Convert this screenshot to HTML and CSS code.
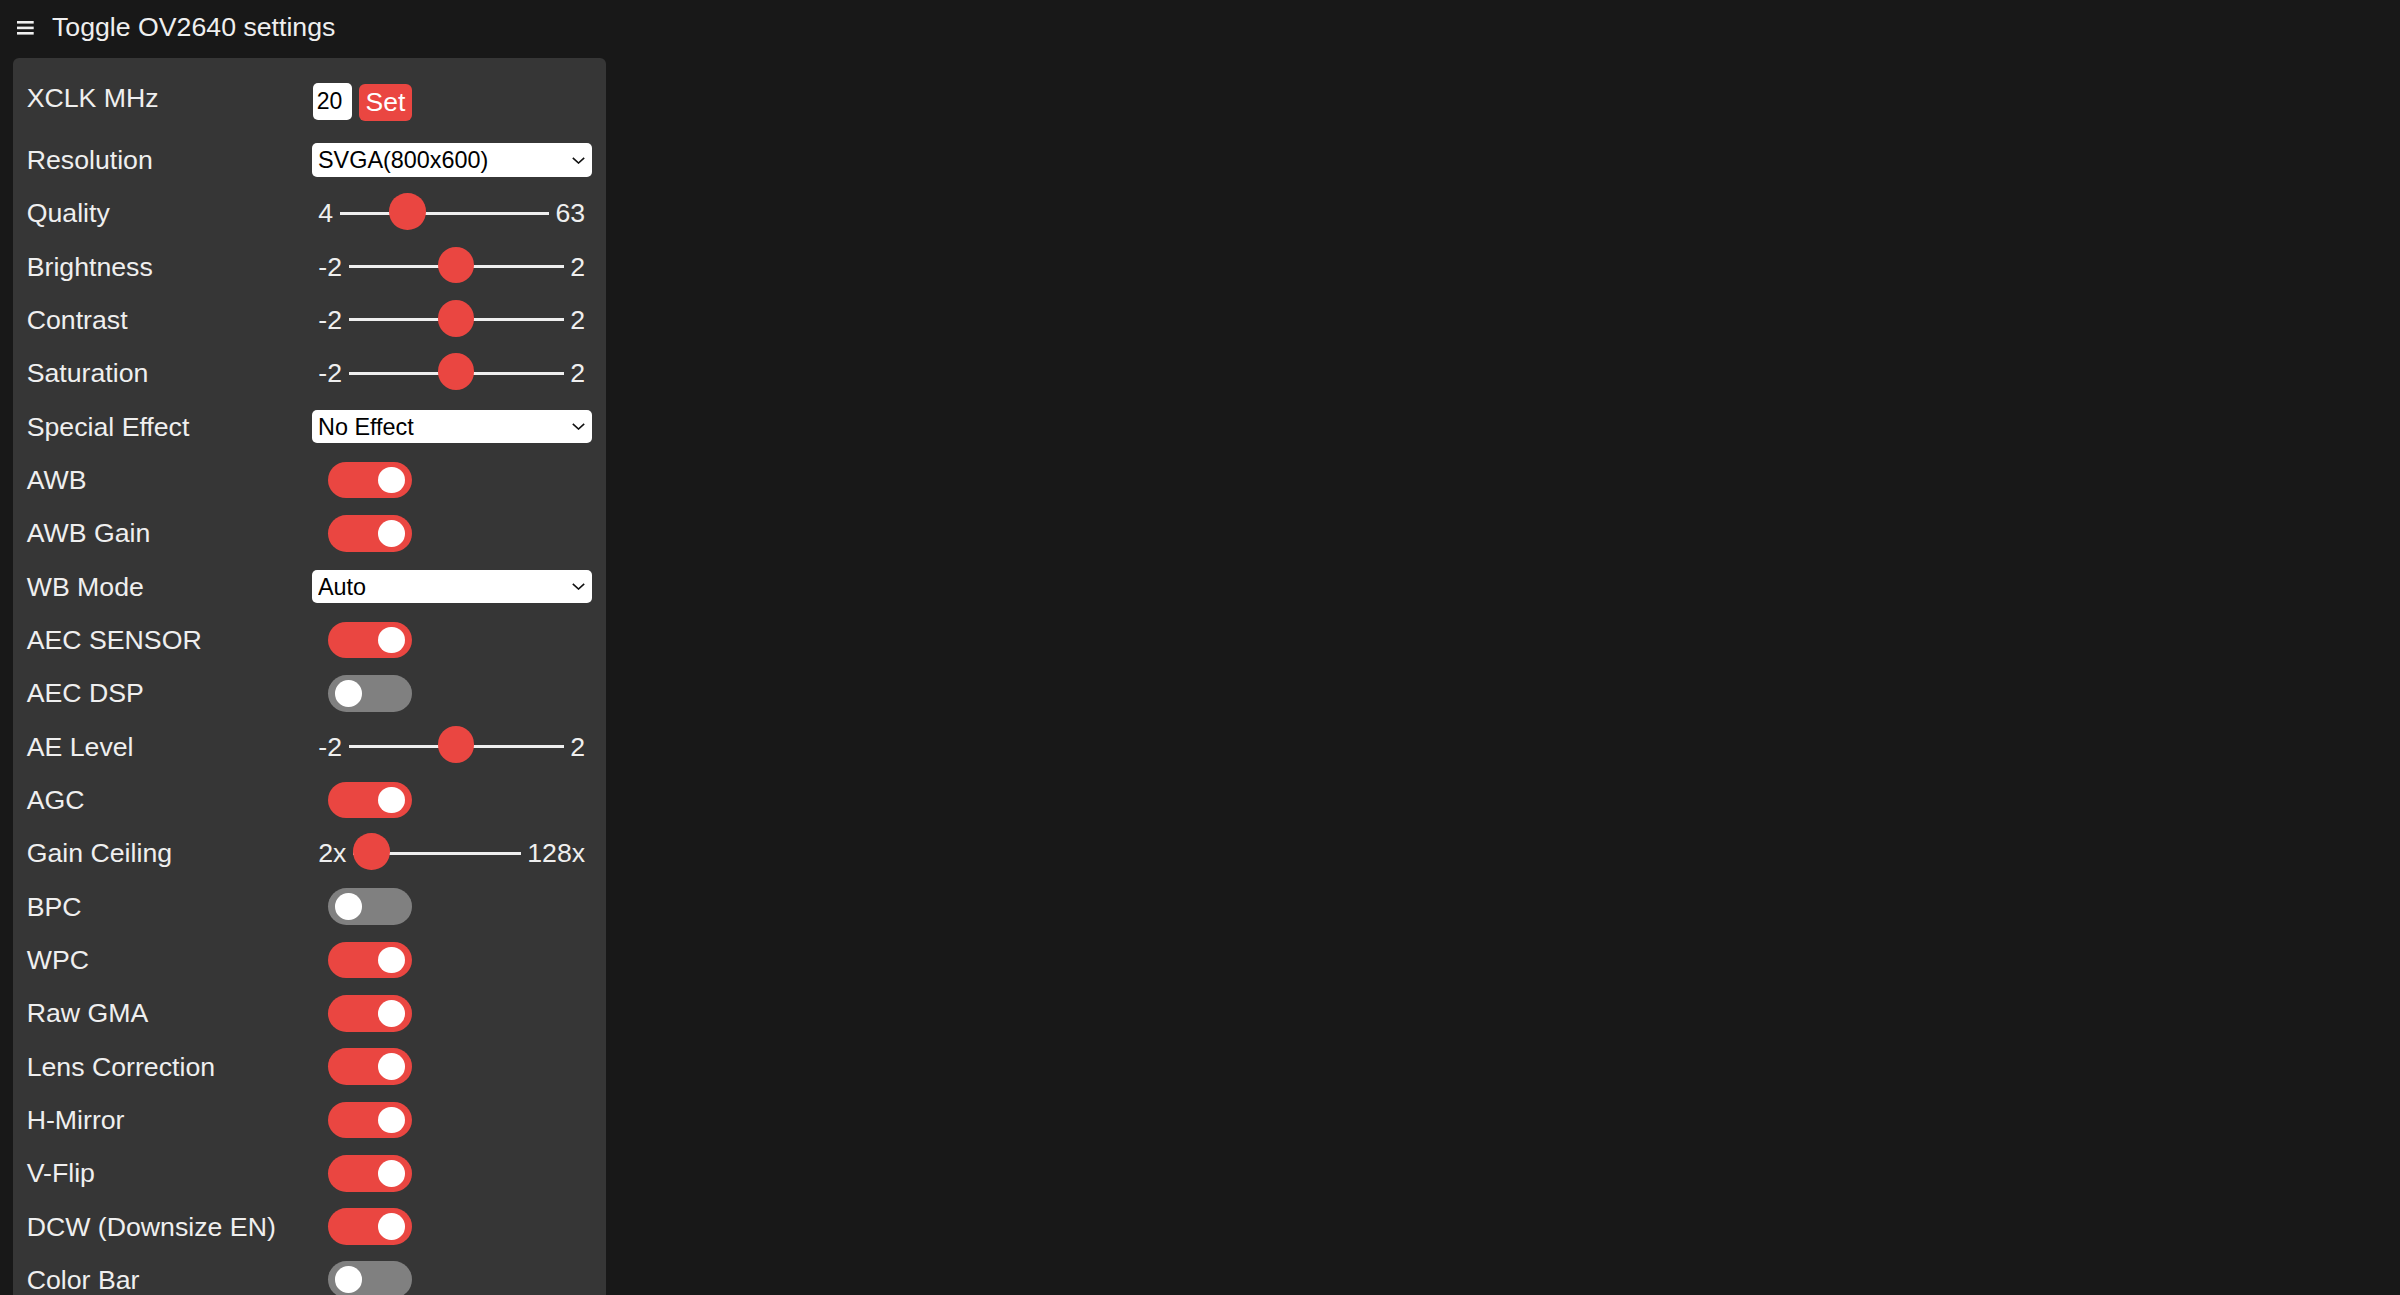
FILE: index.html
```html
<!DOCTYPE html>
<html lang="en">
<head>
<meta charset="utf-8">
<title>ESP32 OV2640</title>
<link rel="stylesheet" href="styles.css">
</head>
<body>
<header class="nav-toggle">
  <svg class="burger" viewBox="0 0 17 14" width="17" height="14" aria-hidden="true">
    <rect x="0" y="0" width="16.7" height="2.6" fill="#efefef"/>
    <rect x="0" y="5.6" width="16.7" height="2.6" fill="#efefef"/>
    <rect x="0" y="11" width="16.7" height="2.6" fill="#efefef"/>
  </svg>
  <span class="nav-title">Toggle OV2640 settings</span>
</header>

<nav class="menu">
  <div class="row row-xclk">
    <label class="lbl">XCLK MHz</label>
    <input class="xclk" type="text" value="20" size="2">
    <button class="set-btn">Set</button>
  </div>

  <div class="row">
    <label class="lbl">Resolution</label>
    <div class="select-wrap">
      <select class="sel"><option>SVGA(800x600)</option></select>
      <svg class="chev" viewBox="0 0 13 7" width="13" height="7" aria-hidden="true"><polyline points="0.8,0.8 6.5,6 12.2,0.8" fill="none" stroke="#111" stroke-width="1.6"/></svg>
    </div>
  </div>

  <div class="row">
    <label class="lbl">Quality</label>
    <div class="range"><span class="rmin">4</span><input type="range" min="4" max="63" value="21"><span class="rmax">63</span></div>
  </div>

  <div class="row">
    <label class="lbl">Brightness</label>
    <div class="range"><span class="rmin">-2</span><input type="range" min="-2" max="2" value="0"><span class="rmax">2</span></div>
  </div>

  <div class="row">
    <label class="lbl">Contrast</label>
    <div class="range"><span class="rmin">-2</span><input type="range" min="-2" max="2" value="0"><span class="rmax">2</span></div>
  </div>

  <div class="row">
    <label class="lbl">Saturation</label>
    <div class="range"><span class="rmin">-2</span><input type="range" min="-2" max="2" value="0"><span class="rmax">2</span></div>
  </div>

  <div class="row">
    <label class="lbl">Special Effect</label>
    <div class="select-wrap">
      <select class="sel"><option>No Effect</option></select>
      <svg class="chev" viewBox="0 0 13 7" width="13" height="7" aria-hidden="true"><polyline points="0.8,0.8 6.5,6 12.2,0.8" fill="none" stroke="#111" stroke-width="1.6"/></svg>
    </div>
  </div>

  <div class="row"><label class="lbl">AWB</label><span class="switch on"></span></div>
  <div class="row"><label class="lbl">AWB Gain</label><span class="switch on"></span></div>

  <div class="row">
    <label class="lbl">WB Mode</label>
    <div class="select-wrap">
      <select class="sel"><option>Auto</option></select>
      <svg class="chev" viewBox="0 0 13 7" width="13" height="7" aria-hidden="true"><polyline points="0.8,0.8 6.5,6 12.2,0.8" fill="none" stroke="#111" stroke-width="1.6"/></svg>
    </div>
  </div>

  <div class="row"><label class="lbl">AEC SENSOR</label><span class="switch on"></span></div>
  <div class="row"><label class="lbl">AEC DSP</label><span class="switch off"></span></div>

  <div class="row">
    <label class="lbl">AE Level</label>
    <div class="range"><span class="rmin">-2</span><input type="range" min="-2" max="2" value="0"><span class="rmax">2</span></div>
  </div>

  <div class="row"><label class="lbl">AGC</label><span class="switch on"></span></div>

  <div class="row">
    <label class="lbl">Gain Ceiling</label>
    <div class="range"><span class="rmin">2x</span><input type="range" min="0" max="6" value="0"><span class="rmax">128x</span></div>
  </div>

  <div class="row"><label class="lbl">BPC</label><span class="switch off"></span></div>
  <div class="row"><label class="lbl">WPC</label><span class="switch on"></span></div>
  <div class="row"><label class="lbl">Raw GMA</label><span class="switch on"></span></div>
  <div class="row"><label class="lbl">Lens Correction</label><span class="switch on"></span></div>
  <div class="row"><label class="lbl">H-Mirror</label><span class="switch on"></span></div>
  <div class="row"><label class="lbl">V-Flip</label><span class="switch on"></span></div>
  <div class="row"><label class="lbl">DCW (Downsize EN)</label><span class="switch on"></span></div>
  <div class="row"><label class="lbl">Color Bar</label><span class="switch off"></span></div>
</nav>
</body>
</html>
```

FILE: styles.css
```css
html, body {
  margin: 0;
  padding: 0;
  overflow: hidden;
  background: #181818;
}

body {
  font-family: "Liberation Sans", Arial, Helvetica, sans-serif;
  font-size: 26.7px;
  color: #efefef;
}

.nav-toggle {
  display: flex;
  align-items: flex-start;
  padding: 8.7px 0 0 17.3px;
  line-height: 36px;
  height: 36px;
}

.burger {
  display: block;
  margin-top: 12.6px;
  margin-right: 17.7px;
  flex-shrink: 0;
}

.nav-title {
  white-space: nowrap;
}

.menu {
  box-sizing: border-box;
  width: 592.7px;
  margin: 13.6px 0 0 13.3px;
  padding: 14px 14.3px 20px 13.4px;
  background: #363636;
  border-radius: 6px;
  display: flex;
  flex-direction: column;
}

.row {
  display: flex;
  align-items: center;
  height: 53.33px;
  flex-shrink: 0;
}

.lbl {
  width: 285px;
  flex-shrink: 0;
  line-height: 36px;
  white-space: nowrap;
}

.row-xclk {
  height: 61px;
  align-items: flex-start;
}

.row-xclk .lbl {
  padding-top: 7.3px;
}

.xclk {
  box-sizing: border-box;
  width: 39px;
  height: 37.3px;
  margin: 10.4px 0 0 1.6px;
  padding: 0 0 0 3.4px;
  border: none;
  border-radius: 5px;
  background: #fff;
  color: #000;
  font-family: inherit;
  font-size: 23px;
  outline: none;
}

.set-btn {
  box-sizing: border-box;
  width: 53px;
  height: 37.3px;
  margin: 11.7px 0 0 6.7px;
  padding: 0;
  border: none;
  border-radius: 6px;
  background: #ea4641;
  color: #fff;
  font-family: inherit;
  font-size: 26.5px;
  line-height: 37px;
}

.select-wrap {
  position: relative;
  width: 280px;
  height: 33.4px;
}

.sel {
  -webkit-appearance: none;
  appearance: none;
  box-sizing: border-box;
  width: 100%;
  height: 100%;
  margin: 0;
  padding: 0 0 0 6.3px;
  border: none;
  border-radius: 5px;
  background: #fff;
  color: #000;
  font-family: inherit;
  font-size: 23.4px;
  outline: none;
}

.chev {
  position: absolute;
  right: 6.5px;
  top: 13.5px;
  pointer-events: none;
}

.range {
  display: flex;
  align-items: center;
  width: 280px;
  line-height: 36px;
}

.rmin, .rmax {
  padding: 0 6.6px;
  white-space: nowrap;
  flex-shrink: 0;
}

.range input[type=range] {
  -webkit-appearance: none;
  appearance: none;
  flex: 1 1 auto;
  min-width: 0;
  width: 100%;
  height: 37px;
  margin: 0;
  background: transparent;
}

.range input[type=range]::-webkit-slider-runnable-track {
  height: 3px;
  background: #efefef;
  border: none;
}

.range input[type=range]::-webkit-slider-thumb {
  -webkit-appearance: none;
  width: 36.7px;
  height: 36.7px;
  border-radius: 50%;
  background: #ea4641;
  border: none;
  margin-top: -18.6px;
}

.switch {
  box-sizing: border-box;
  display: flex;
  align-items: center;
  width: 83.3px;
  height: 36.7px;
  margin-left: 16.6px;
  padding: 0 6.7px;
  border-radius: 18.4px;
  flex-shrink: 0;
}

.switch::before {
  content: "";
  display: block;
  width: 26.7px;
  height: 26.7px;
  border-radius: 50%;
  background: #fff;
}

.switch.on {
  background: #ea4641;
  justify-content: flex-end;
}

.switch.off {
  background: #808080;
  justify-content: flex-start;
}
```
